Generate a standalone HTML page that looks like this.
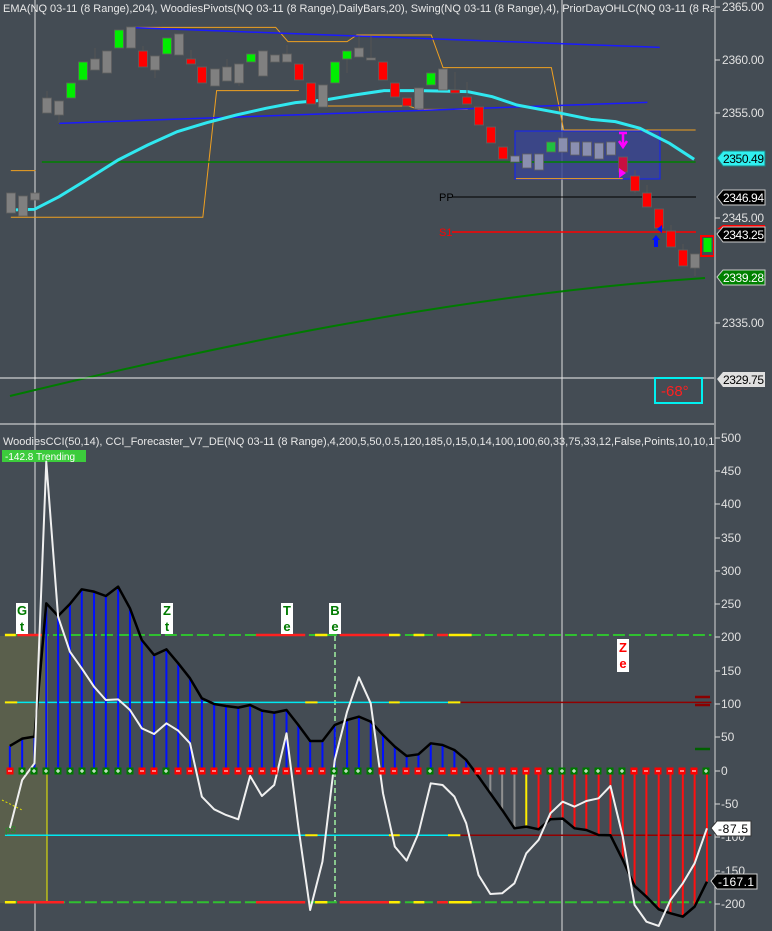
<!DOCTYPE html>
<html><head><meta charset="utf-8"><style>
html,body{margin:0;padding:0;background:#444c54;}
svg{display:block;font-family:"Liberation Sans",sans-serif;}
</style></head><body>
<svg width="772" height="931" viewBox="0 0 772 931" xmlns="http://www.w3.org/2000/svg">
<defs>
<clipPath id="c"><rect x="0" y="0" width="714" height="931"/></clipPath>
<g id="mr"><rect x="-3.5" y="-3.5" width="7" height="7" fill="#ff0000"/><rect x="-2" y="-0.5" width="4" height="1" fill="#fff"/></g>
<g id="mg"><rect x="-3.5" y="-3.5" width="7" height="7" fill="#007a00"/><rect x="-2" y="-0.5" width="4" height="1" fill="#fff"/><rect x="-0.5" y="-2" width="1" height="4" fill="#fff"/></g>
</defs>
<rect width="772" height="931" fill="#444c54"/>
<g clip-path="url(#c)">
<text x="3" y="12" font-size="11" fill="#e8e8e8">EMA(NQ 03-11 (8 Range),204), WoodiesPivots(NQ 03-11 (8 Range),DailyBars,20), Swing(NQ 03-11 (8 Range),4), PriorDayOHLC(NQ 03-11 (8 Range))</text>
<line x1="35" y1="0" x2="35" y2="931" stroke="#e0e0e0" stroke-width="1"/>
<line x1="562" y1="0" x2="562" y2="931" stroke="#e0e0e0" stroke-width="1"/>
<rect x="515" y="131" width="145" height="48" fill="#3a4590" fill-opacity="0.85" stroke="#1020ff" stroke-width="1"/>
<g transform="scale(0.4923,0.3333)" fill="none">
<polyline vector-effect="non-scaling-stroke" stroke="#f0a020" stroke-width="1" points="22,512 72,512"/>
<polyline vector-effect="non-scaling-stroke" stroke="#f0a020" stroke-width="1" points="22,652 412,652 440,272 607,272"/>
<polyline vector-effect="non-scaling-stroke" stroke="#f0a020" stroke-width="1" points="270,82 560,82 585,125 705,125 725,105 876,105 900,203 1120,203 1145,390 1413,390"/>
<polyline vector-effect="non-scaling-stroke" stroke="#f0a020" stroke-width="1" points="655,318 830,318 850,328 950,328"/>
<polyline vector-effect="non-scaling-stroke" stroke="#f0a020" stroke-width="1" points="1048,536 1265,536"/>
<polyline vector-effect="non-scaling-stroke" stroke="#1a1aff" stroke-width="1.5" points="270,83 1340,142"/>
<polyline vector-effect="non-scaling-stroke" stroke="#1a1aff" stroke-width="1.5" points="120,370 1315,307"/>
<polyline vector-effect="non-scaling-stroke" stroke="#008000" stroke-width="1.5" points="85,486 1413,486"/>
<polyline vector-effect="non-scaling-stroke" stroke="#30e8f0" stroke-width="3" points="22,630 70,628 120,590 170,545 240,480 300,435 360,395 420,368 480,345 540,325 600,308 660,300 720,285 780,272 850,272 950,275 1000,290 1050,315 1140,340 1200,358 1250,365 1300,385 1360,430 1410,478"/>
</g>
<line x1="452" y1="197" x2="696" y2="197" stroke="#000" stroke-width="1"/>
<text x="439" y="201" font-size="11" fill="#000">PP</text>
<line x1="452" y1="232" x2="696" y2="232" stroke="#ff0000" stroke-width="1.5"/>
<text x="439" y="236" font-size="11" fill="#ff0000">S1</text>
<path d="M10,396 C200,350 450,295 705,278" stroke="#007a00" stroke-width="2" fill="none"/>
<line x1="0" y1="378" x2="714" y2="378" stroke="#f0f0f0" stroke-width="1"/>
<g stroke="#555" stroke-width="1">
<line x1="47" y1="91" x2="47" y2="113"/><line x1="59" y1="101" x2="59" y2="123"/><line x1="95" y1="48" x2="95" y2="70"/>
<line x1="143" y1="46" x2="143" y2="67"/><line x1="155" y1="56" x2="155" y2="78"/><line x1="191" y1="50" x2="191" y2="64"/>
<line x1="227" y1="59" x2="227" y2="81"/><line x1="239" y1="64" x2="239" y2="86"/><line x1="287" y1="45" x2="287" y2="62"/>
<line x1="347" y1="51" x2="347" y2="73"/><line x1="359" y1="36" x2="359" y2="57"/><line x1="371" y1="36" x2="371" y2="60"/>
<line x1="455" y1="72" x2="455" y2="93"/><line x1="467" y1="82" x2="467" y2="104"/><line x1="635" y1="170" x2="635" y2="193"/>
<line x1="647" y1="185" x2="647" y2="207"/><line x1="671" y1="225" x2="671" y2="247"/><line x1="683" y1="244" x2="683" y2="266"/><line x1="695" y1="254" x2="695" y2="276"/>
</g>
<g stroke="#606060" stroke-width="0.8">
<rect x="6.5" y="193" width="9" height="20" fill="#808080"/>
<rect x="18.5" y="196" width="9" height="20" fill="#808080"/>
<rect x="30.5" y="193" width="9" height="7" fill="#808080"/>
<rect x="42.5" y="98" width="9" height="15" fill="#808080"/>
<rect x="54.5" y="101" width="9" height="14" fill="#808080"/>
<rect x="66.5" y="83" width="9" height="15" fill="#00ee00"/>
<rect x="78.5" y="62" width="9" height="18" fill="#00ee00"/>
<rect x="90.5" y="59" width="9" height="11" fill="#808080"/>
<rect x="102.5" y="51" width="9" height="22" fill="#808080"/>
<rect x="114.5" y="30" width="9" height="18" fill="#00ee00"/>
<rect x="126.5" y="27" width="9" height="21" fill="#808080"/>
<rect x="138.5" y="51" width="9" height="16" fill="#ff0000"/>
<rect x="150.5" y="56" width="9" height="14" fill="#808080"/>
<rect x="162.5" y="38" width="9" height="16" fill="#00ee00"/>
<rect x="174.5" y="34" width="9" height="21" fill="#808080"/>
<rect x="186.5" y="59" width="9" height="5" fill="#ff0000"/>
<rect x="197.5" y="67" width="9" height="16" fill="#ff0000"/>
<rect x="210.5" y="69" width="9" height="17" fill="#808080"/>
<rect x="222.5" y="67" width="9" height="14" fill="#808080"/>
<rect x="234.5" y="64" width="9" height="19" fill="#808080"/>
<rect x="246.5" y="54" width="9" height="8" fill="#00ee00"/>
<rect x="258.5" y="51" width="9" height="25" fill="#808080"/>
<rect x="270.5" y="55" width="9" height="7" fill="#808080"/>
<rect x="282.5" y="54" width="9" height="8" fill="#808080"/>
<rect x="294.5" y="64" width="9" height="16" fill="#ff0000"/>
<rect x="306.5" y="83" width="9" height="21" fill="#ff0000"/>
<rect x="318.5" y="85" width="9" height="22" fill="#808080"/>
<rect x="330.5" y="62" width="9" height="21" fill="#00ee00"/>
<rect x="342.5" y="51" width="9" height="8" fill="#00ee00"/>
<rect x="354.5" y="48" width="9" height="9" fill="#808080"/>
<rect x="366.5" y="58" width="9" height="2" fill="#808080"/>
<rect x="378.5" y="62" width="9" height="18" fill="#ff0000"/>
<rect x="390.5" y="83" width="9" height="14" fill="#ff0000"/>
<rect x="402.5" y="98" width="9" height="8" fill="#ff0000"/>
<rect x="414.5" y="88" width="9" height="21" fill="#808080"/>
<rect x="426.5" y="73" width="9" height="12" fill="#00ee00"/>
<rect x="438.5" y="69" width="9" height="21" fill="#808080"/>
<rect x="450.5" y="90" width="9" height="3" fill="#ff0000"/>
<rect x="462.5" y="97" width="9" height="7" fill="#ff0000"/>
<rect x="474.5" y="107" width="9" height="18" fill="#ff0000"/>
<rect x="486.5" y="127" width="9" height="16" fill="#ff0000"/>
<rect x="498.5" y="147" width="9" height="12" fill="#ff0000"/>
<rect x="510.5" y="156" width="9" height="6" fill="#8a8fb0"/>
<rect x="522.5" y="154" width="9" height="14" fill="#8a8fb0"/>
<rect x="534.5" y="154" width="9" height="16" fill="#8a8fb0"/>
<rect x="546.5" y="142" width="9" height="10" fill="#20c040"/>
<rect x="558.5" y="138" width="9" height="14" fill="#8a8fb0"/>
<rect x="570.5" y="142" width="9" height="13" fill="#8a8fb0"/>
<rect x="582.5" y="142" width="9" height="14" fill="#8a8fb0"/>
<rect x="594.5" y="143" width="9" height="16" fill="#8a8fb0"/>
<rect x="606.5" y="142" width="9" height="13" fill="#8a8fb0"/>
<rect x="618.5" y="157" width="9" height="15" fill="#c81040"/>
<rect x="630.5" y="176" width="9" height="15" fill="#ff0000"/>
<rect x="642.5" y="193" width="9" height="14" fill="#ff0000"/>
<rect x="654.5" y="209" width="9" height="19" fill="#ff0000"/>
<rect x="666.5" y="231" width="9" height="16" fill="#ff0000"/>
<rect x="678.5" y="250" width="9" height="16" fill="#ff0000"/>
<rect x="690.5" y="254" width="9" height="14" fill="#808080"/>
</g>
<rect x="701" y="236" width="13" height="20" fill="none" stroke="#ff0000" stroke-width="2"/>
<rect x="703.5" y="238" width="8" height="14" fill="#00ee00"/>
<path d="M619,133 L627,133 M623,133 L623,145 M619,141 L623,147 L627,141" stroke="#ff00ff" stroke-width="2.5" fill="none"/>
<path d="M619,168 L626,173 L619,178 Z" fill="#ff00ff"/>
<path d="M656,235 L660,240 L658,240 L658,247 L654,247 L654,240 L652,240 Z" fill="#0010ff"/>
<path d="M662,225 L662,233 L657,229 Z" fill="#0010ff"/>
<rect x="655" y="378" width="47" height="25" fill="none" stroke="#00f0f0" stroke-width="2"/>
<text x="661" y="396" font-size="15" fill="#ff2020">-68°</text>

<line x1="0" y1="424" x2="772" y2="424" stroke="#e8e8e8" stroke-width="1"/>

<text x="3" y="445" font-size="11" fill="#e8e8e8">WoodiesCCI(50,14), CCI_Forecaster_V7_DE(NQ 03-11 (8 Range),4,200,5,50,0.5,120,185,0,15,0,14,100,100,60,33,75,33,12,False,Points,10,10,1)</text>
<rect x="2" y="450" width="84" height="12" fill="#3ccc3c"/>
<text x="5" y="460" font-size="10" fill="#fff">-142.8 Trending</text>
<rect x="0" y="636" width="47" height="267" fill="#5a5f4c"/>
<line x1="47" y1="636" x2="47" y2="903" stroke="#f0f000" stroke-width="1"/>
<line x1="335" y1="636" x2="335" y2="903" stroke="#a0f0a0" stroke-width="1.5" stroke-dasharray="5,3"/>
<g transform="translate(0,580) scale(0.4923,0.3333)" fill="none">
<g stroke-width="2">
<polyline vector-effect="non-scaling-stroke" stroke="#30c030" stroke-dasharray="12,4" points="10,165 1445,165"/>
<polyline vector-effect="non-scaling-stroke" stroke="#30c030" stroke-dasharray="12,4" points="10,967 1445,967"/>
</g>
<g stroke-width="2.5">
<path vector-effect="non-scaling-stroke" stroke="#ffee00" d="M10,165H32M640,165H665M790,165H812M840,165H862M912,165H958M10,967H32M640,967H665M790,967H812M840,967H862M912,967H958"/>
<path vector-effect="non-scaling-stroke" stroke="#ff2020" d="M35,165H85M520,165H620M690,165H790M888,165H910M35,967H130M520,967H620M690,967H790M888,967H910"/>
</g>
<polyline vector-effect="non-scaling-stroke" stroke="#00e8f0" stroke-width="1.5" points="10,367 935,367"/>
<polyline vector-effect="non-scaling-stroke" stroke="#900000" stroke-width="1.5" points="935,367 1445,367"/>
<polyline vector-effect="non-scaling-stroke" stroke="#00e8f0" stroke-width="1.5" points="10,766 935,766"/>
<polyline vector-effect="non-scaling-stroke" stroke="#900000" stroke-width="1.5" points="935,766 1445,766"/>
<path vector-effect="non-scaling-stroke" stroke="#ffee00" stroke-width="2" d="M10,367H35M620,367H645M790,367H812M910,367H935M620,766H645M790,766H812M910,766H935"/>
<g stroke-width="2">
<path vector-effect="non-scaling-stroke" stroke="#0010ff" d="M20,572V498M45,572V476M70,572V470M94,572V70M118,572V108M142,572V72M166,572V28M191,572V35M215,572V48M240,572V20M264,572V85M288,572V180M313,572V225M338,572V208M362,572V250M386,572V295M410,572V355M435,572V372M459,572V378M484,572V383M508,572V375M532,572V392M557,572V398M582,572V390M606,572V435M630,572V483M655,572V483M680,572V435M705,572V420M729,572V410M753,572V425M778,572V465M802,572V500M826,572V528M850,572V523M875,572V490M899,572V495M923,572V510M947,572V540"/>
<path vector-effect="non-scaling-stroke" stroke="#909090" d="M972,572V590M996,572V640M1020,572V690M1045,572V745"/>
<path vector-effect="non-scaling-stroke" stroke="#ffee00" d="M1069,578V740"/>
<path vector-effect="non-scaling-stroke" stroke="#ff1010" d="M1094,578V748M1118,578V718M1143,578V716M1167,578V745M1191,578V750M1216,578V765M1240,578V766M1265,578V840M1289,578V918M1313,578V950M1338,578V988M1362,578V1000M1387,578V1010M1411,578V980M1436,578V905"/>
</g>
<polyline vector-effect="non-scaling-stroke" stroke="#000" stroke-width="2.5" stroke-linejoin="round" points="20,498 45,476 70,470 94,70 118,108 142,72 166,28 191,35 215,48 240,20 264,85 288,180 313,225 338,208 362,250 386,295 410,355 435,372 459,378 484,383 508,375 532,392 557,398 582,390 606,435 630,483 655,483 680,435 705,420 729,410 753,425 778,465 802,500 826,528 850,523 875,490 899,495 923,510 947,540 972,590 996,640 1020,690 1045,745 1069,740 1094,748 1118,718 1143,716 1167,745 1191,750 1216,765 1240,766 1265,840 1289,918 1313,950 1338,988 1362,1000 1387,1010 1411,980 1436,905"/>
<polyline vector-effect="non-scaling-stroke" stroke="#f0f0f0" stroke-width="2" stroke-linejoin="round" points="20,745 45,600 70,550 94,-355 118,110 142,215 166,265 191,320 215,360 240,358 264,390 288,445 313,462 338,430 362,452 386,490 410,650 435,688 459,705 484,718 508,588 532,648 557,615 582,460 606,740 630,990 655,845 680,540 705,395 729,292 753,370 778,640 802,800 826,842 850,760 875,610 899,615 923,650 947,730 972,885 996,942 1020,940 1045,910 1069,820 1094,780 1118,700 1143,665 1167,680 1191,663 1216,655 1240,618 1265,770 1289,975 1313,1025 1338,1038 1362,960 1387,910 1411,850 1436,745"/>
</g>
<g>
<use href="#mr" x="10" y="771"/><use href="#mg" x="22" y="771"/><use href="#mg" x="34" y="771"/><use href="#mg" x="46" y="771"/><use href="#mg" x="58" y="771"/><use href="#mg" x="70" y="771"/><use href="#mg" x="82" y="771"/><use href="#mg" x="94" y="771"/><use href="#mg" x="106" y="771"/><use href="#mg" x="118" y="771"/><use href="#mg" x="130" y="771"/><use href="#mr" x="142" y="771"/><use href="#mr" x="154" y="771"/><use href="#mg" x="166" y="771"/><use href="#mr" x="178" y="771"/><use href="#mr" x="190" y="771"/><use href="#mr" x="202" y="771"/><use href="#mr" x="214" y="771"/><use href="#mr" x="226" y="771"/><use href="#mr" x="238" y="771"/><use href="#mr" x="250" y="771"/><use href="#mr" x="262" y="771"/><use href="#mr" x="274" y="771"/><use href="#mr" x="286" y="771"/><use href="#mr" x="298" y="771"/><use href="#mr" x="310" y="771"/><use href="#mr" x="322" y="771"/><use href="#mg" x="334" y="771"/><use href="#mg" x="346" y="771"/><use href="#mg" x="358" y="771"/><use href="#mg" x="370" y="771"/><use href="#mr" x="382" y="771"/><use href="#mr" x="394" y="771"/><use href="#mr" x="406" y="771"/><use href="#mr" x="418" y="771"/><use href="#mg" x="430" y="771"/><use href="#mr" x="442" y="771"/><use href="#mr" x="454" y="771"/><use href="#mr" x="466" y="771"/><use href="#mr" x="478" y="771"/><use href="#mr" x="490" y="771"/><use href="#mr" x="502" y="771"/><use href="#mr" x="514" y="771"/><use href="#mr" x="526" y="771"/><use href="#mr" x="538" y="771"/><use href="#mg" x="550" y="771"/><use href="#mg" x="562" y="771"/><use href="#mg" x="574" y="771"/><use href="#mg" x="586" y="771"/><use href="#mg" x="598" y="771"/><use href="#mg" x="610" y="771"/><use href="#mg" x="622" y="771"/><use href="#mr" x="634" y="771"/><use href="#mr" x="646" y="771"/><use href="#mr" x="658" y="771"/><use href="#mr" x="670" y="771"/><use href="#mr" x="682" y="771"/><use href="#mr" x="694" y="771"/><use href="#mg" x="706" y="771"/>
</g>
<g font-size="13" font-weight="bold" text-anchor="middle">
<rect x="16" y="603" width="12" height="31" fill="#fff"/><text x="22" y="615" fill="#007a00">G</text><text x="22" y="631" fill="#007a00">t</text>
<rect x="161" y="603" width="12" height="31" fill="#fff"/><text x="167" y="615" fill="#007a00">Z</text><text x="167" y="631" fill="#007a00">t</text>
<rect x="281" y="603" width="12" height="31" fill="#fff"/><text x="287" y="615" fill="#007a00">T</text><text x="287" y="631" fill="#007a00">e</text>
<rect x="329" y="603" width="12" height="31" fill="#fff"/><text x="335" y="615" fill="#007a00">B</text><text x="335" y="631" fill="#007a00">e</text>
<rect x="617" y="639" width="12" height="33" fill="#fff"/><text x="623" y="652" fill="#ff0000">Z</text><text x="623" y="668" fill="#ff0000">e</text>
</g>
<text x="5" y="833" font-size="10" fill="#2a8a2a">p3</text>
<line x1="2" y1="800" x2="22" y2="810" stroke="#e0e000" stroke-dasharray="2,2"/>
<path d="M695,697H710M695,705H710" stroke="#8a0000" stroke-width="2.5"/>
<path d="M695,749H710" stroke="#006000" stroke-width="2.5"/>
</g>

<line x1="715" y1="0" x2="715" y2="931" stroke="#d8d8d8" stroke-width="1"/>
<g stroke="#d8d8d8" stroke-width="1">
<path d="M715,7h5M715,60h5M715,113h5M715,218h5M715,323h5M715,438h5M715,471h5M715,504h5M715,538h5M715,571h5M715,604h5M715,637h5M715,671h5M715,704h5M715,737h5M715,771h5M715,804h5M715,837h5M715,871h5M715,904h5"/>
</g>
<g font-size="12" fill="#e0e0e0">
<text x="722" y="11" textLength="42">2365.00</text><text x="722" y="64" textLength="42">2360.00</text><text x="722" y="117" textLength="42">2355.00</text><text x="722" y="222" textLength="42">2345.00</text><text x="722" y="274" textLength="42">2340.00</text><text x="722" y="327" textLength="42">2335.00</text>
<text x="721" y="442">500</text><text x="721" y="475">450</text><text x="721" y="508">400</text><text x="721" y="542">350</text><text x="721" y="575">300</text><text x="721" y="608">250</text><text x="721" y="641">200</text><text x="721" y="675">150</text><text x="721" y="708">100</text><text x="721" y="741">50</text><text x="721" y="775">0</text><text x="721" y="808">-50</text><text x="721" y="841">-100</text><text x="721" y="875">-150</text><text x="721" y="908">-200</text>
</g>
<g font-size="12">
<path d="M717,158 L723,151 L765,151 L765,166 L723,166 Z" fill="#30f0f0" stroke="#208080"/><text x="723" y="163" fill="#000" textLength="41">2350.49</text>
<path d="M717,197 L723,190 L765,190 L765,205 L723,205 Z" fill="#000" stroke="#ccc"/><text x="723" y="202" fill="#fff" textLength="41">2346.94</text>
<path d="M717,229 L723,225 L765,225 L765,235 Z" fill="#ff0000"/>
<path d="M717,234 L723,227 L765,227 L765,242 L723,242 Z" fill="#000" stroke="#ccc"/><text x="723" y="239" fill="#fff" textLength="41">2343.25</text>
<rect x="720" y="262" width="45" height="8" fill="#444c54"/>
<path d="M717,277 L723,270 L765,270 L765,285 L723,285 Z" fill="#008000" stroke="#ccc"/><text x="723" y="282" fill="#fff" textLength="41">2339.28</text>
<path d="M717,379 L723,372 L765,372 L765,387 L723,387 Z" fill="#e0e0e0"/><text x="723" y="384" fill="#000" textLength="41">2329.75</text>
<path d="M711,828 L717,821 L751,821 L751,836 L717,836 Z" fill="#fff" stroke="#333"/><text x="718" y="833" fill="#000" textLength="30">-87.5</text>
<path d="M711,881 L717,874 L757,874 L757,889 L717,889 Z" fill="#000" stroke="#ccc"/><text x="718" y="886" fill="#fff" textLength="36">-167.1</text>
</g>
</svg>
</body></html>
